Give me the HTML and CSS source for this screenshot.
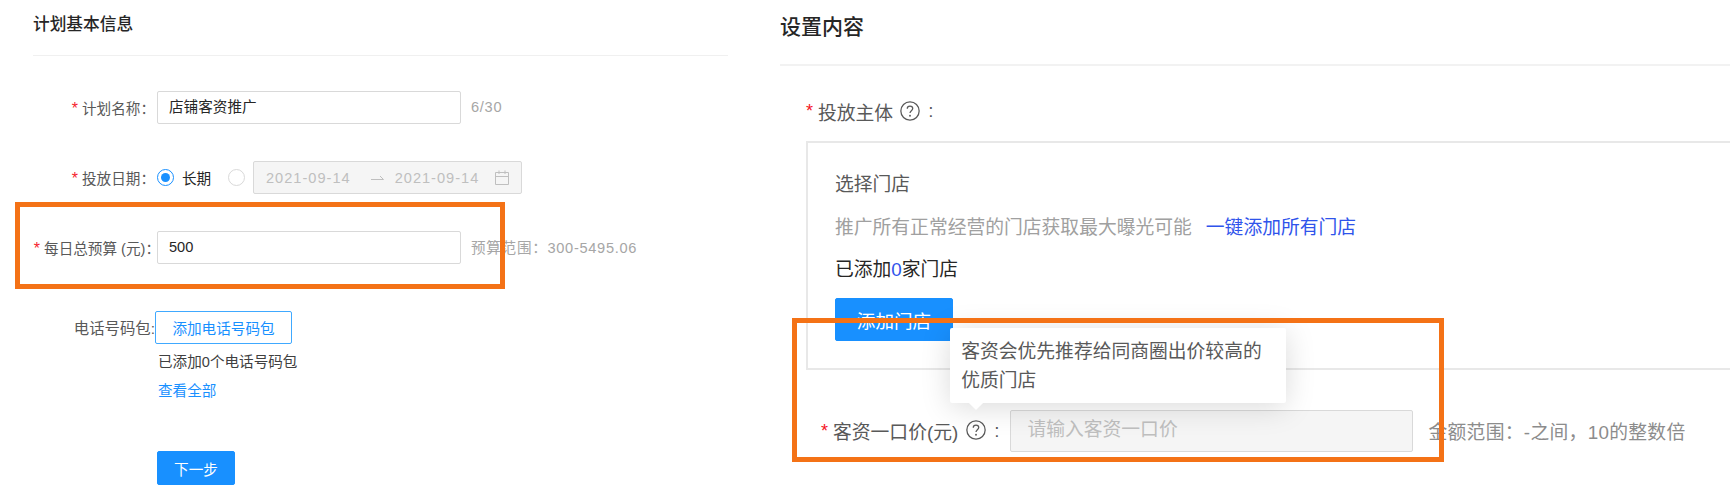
FILE: index.html
```html
<!DOCTYPE html>
<html lang="zh-CN">
<head>
    <meta charset="UTF-8">
    <title>计划设置</title>
    <link rel="stylesheet" href="styles.css">
</head>
<body>
    <section class="plan-panel">
        <h2 class="plan-title">计划基本信息</h2>

        <div class="plan-row plan-row-first">
            <label class="plan-label"><span class="star">*</span>计划名称：</label>
            <div class="text-input">店铺客资推广</div>
            <span class="hint">6/30</span>
        </div>

        <div class="plan-row">
            <label class="plan-label"><span class="star">*</span>投放日期：</label>
            <span class="radio radio-on"></span>
            <span class="radio-text">长期</span>
            <span class="radio"></span>
            <div class="date-range">
                <span class="date-value">2021-09-14</span>
                <svg class="date-arrow" width="13" height="8" viewBox="0 0 13 8"><path d="M0 5.5h12.5L9 2" fill="none" stroke="#bfbfbf" stroke-width="1"/></svg>
                <span class="date-value">2021-09-14</span>
                <svg class="date-icon" width="14" height="15" viewBox="0 0 14 15"><path d="M.5 2.5h13v12H.5zM.5 6.5h13M4 .5v3.500M10 .5v3.500" fill="none" stroke="#bfbfbf" stroke-width="1"/></svg>
            </div>
        </div>

        <div class="plan-row">
            <label class="plan-label plan-label-wide"><span class="star">*</span>每日总预算 (元)：</label>
            <div class="text-input">500</div>
            <span class="hint">预算范围：300-5495.06</span>
        </div>

        <div class="plan-row plan-row-phone">
            <label class="plan-label plan-label-phone">电话号码包:</label>
            <button class="btn-outline">添加电话号码包</button>
        </div>
        <div class="plan-note">已添加0个电话号码包</div>
        <a class="plan-link">查看全部</a>
        <button class="btn-primary btn-next">下一步</button>
    </section>

    <section class="content-panel">
        <h2 class="content-title">设置内容</h2>

        <div class="subject-label">
            <span class="star-big">*</span>投放主体
            <svg class="help-icon" width="20" height="20" viewBox="0 0 19 19"><circle cx="9.500" cy="9.500" r="8.700" fill="none" stroke="#595959" stroke-width="1.200"/><path d="M6.900 7.400c0-1.500 1.100-2.500 2.600-2.500s2.600 1 2.600 2.300c0 2-2.600 2.200-2.600 4.300" fill="none" stroke="#595959" stroke-width="1.200"/><circle cx="9.500" cy="14" r=".9" fill="#595959"/></svg>
            <span class="colon">:</span>
        </div>

        <div class="store-box">
            <div class="store-head">选择门店</div>
            <div class="store-desc">推广所有正常经营的门店获取最大曝光可能<a class="store-link">一键添加所有门店</a></div>
            <div class="store-count">已添加<em>0</em>家门店</div>
            <button class="btn-primary btn-store">添加门店</button>
        </div>

        <div class="price-row">
            <span class="star-big">*</span><span class="price-label">客资一口价(元)</span>
            <span class="tip-anchor">
                <svg class="help-icon" width="20" height="20" viewBox="0 0 19 19"><circle cx="9.500" cy="9.500" r="8.700" fill="none" stroke="#595959" stroke-width="1.200"/><path d="M6.900 7.400c0-1.500 1.100-2.500 2.600-2.500s2.600 1 2.600 2.300c0 2-2.600 2.200-2.600 4.300" fill="none" stroke="#595959" stroke-width="1.200"/><circle cx="9.500" cy="14" r=".9" fill="#595959"/></svg>
                <div class="tooltip">客资会优先推荐给同商圈出价较高的<br>优质门店</div>
            </span>
            <span class="colon">:</span>
            <div class="price-input">请输入客资一口价</div>
            <span class="price-hint">金额范围：-之间，10的整数倍</span>
        </div>
    </section>

    <div class="highlight highlight-budget"></div>
    <div class="highlight highlight-price"></div>
</body>
</html>
```

FILE: styles.css
```css
* {
    margin: 0;
    padding: 0;
    box-sizing: border-box;
}

html, body {
    height: 100%;
    overflow: hidden;
}

body {
    font-family: "Liberation Sans", "Noto Sans CJK SC", sans-serif;
    background: #fff;
    color: #595959;
    position: relative;
    display: flex;
}

button {
    font-family: inherit;
    cursor: pointer;
}

/* Left panel */
.plan-panel {
    width: 780px;
    flex-shrink: 0;
    padding: 0 52px 0 33px;
    font-size: 14.6px;
}

.plan-title {
    height: 56px;
    padding-top: 14px;
    font-size: 16.7px;
    line-height: 22px;
    font-weight: 500;
    color: #262626;
    border-bottom: 1px solid #f0f0f0;
}

.plan-row {
    display: flex;
    align-items: center;
    height: 33px;
    margin-top: 37px;
}

.plan-row-first {
    margin-top: 35px;
}

.plan-row-phone {
    margin-top: 47px;
}

.plan-label {
    width: 124px;
    padding-right: 2px;
    margin-top: -1px;
    text-align: right;
    white-space: nowrap;
    flex-shrink: 0;
}

.plan-label-wide {
    width: 127px;
    padding-right: 0;
    margin-right: -3px;
}

.plan-label-phone {
    padding-right: 2px;
    margin-right: -2px;
    font-size: 15.4px;
}

.star {
    color: #f5222d;
    margin-right: 4px;
    font-size: 16px;
}

.text-input {
    width: 304px;
    height: 33px;
    line-height: 30px;
    padding-left: 11px;
    border: 1px solid #d9d9d9;
    border-radius: 2px;
    color: #262626;
    background: #fff;
}

.hint {
    margin-left: 10px;
    margin-top: -2px;
    color: #a6a6a6;
    letter-spacing: .7px;
    white-space: nowrap;
}

.radio {
    width: 17px;
    height: 17px;
    border: 1px solid #d9d9d9;
    border-radius: 50%;
    flex-shrink: 0;
    margin-right: 8px;
    position: relative;
}

.radio-on {
    border-color: #1890ff;
}

.radio-on::after {
    content: '';
    position: absolute;
    top: 3px;
    left: 3px;
    width: 9px;
    height: 9px;
    border-radius: 50%;
    background: #1890ff;
}

.radio-text {
    width: 46px;
    color: #262626;
}

.date-range {
    display: flex;
    align-items: center;
    width: 269px;
    height: 33px;
    padding-left: 12px;
    border: 1px solid #d9d9d9;
    border-radius: 2px;
    background: #f5f5f5;
    color: #bfbfbf;
}

.date-value {
    letter-spacing: 1px;
    white-space: nowrap;
}

.date-arrow {
    margin: 0 11px 0 20px;
}

.date-icon {
    margin-left: 16px;
}

.plan-note {
    margin: 8px 0 0 125px;
    line-height: 20px;
    color: #404040;
}

.plan-link {
    display: block;
    margin: 9px 0 0 125px;
    line-height: 20px;
    color: #1890ff;
}

.btn-outline {
    width: 137px;
    height: 33px;
    font-size: 14.6px;
    color: #1890ff;
    background: #fff;
    border: 1px solid #40a9ff;
    border-radius: 2px;
}

.btn-primary {
    display: block;
    color: #fff;
    background: #1890ff;
    border: 1px solid #1890ff;
    border-radius: 2px;
}

.btn-next {
    width: 78px;
    height: 34px;
    margin: 50px 0 0 124px;
    font-size: 14.6px;
}

/* Right panel */
.content-panel {
    flex: 1;
    min-width: 0;
    font-size: 18.8px;
}

.content-title {
    height: 66px;
    padding-top: 13px;
    font-size: 21px;
    line-height: 28px;
    font-weight: 500;
    color: #262626;
    border-bottom: 2px solid #f2f2f2;
}

.subject-label {
    display: flex;
    align-items: center;
    height: 28px;
    margin: 31px 0 0 26px;
}

.star-big {
    color: #f5121d;
    margin-right: 5px;
    font-size: 18px;
}

.help-icon {
    display: block;
    flex-shrink: 0;
}

.subject-label .help-icon {
    margin-left: 7px;
}

.colon {
    margin-left: 8px;
}

.store-box {
    height: 229px;
    margin: 16px 0 0 26px;
    padding: 28px 0 0 27px;
    border: 2px solid #e8e8e8;
    border-right: 0;
}

.store-head {
    line-height: 28px;
}

.store-desc {
    margin-top: 15px;
    line-height: 28px;
    color: #a0a0a0;
}

.store-link {
    margin-left: 14px;
    color: #2f54eb;
}

.store-count {
    margin-top: 14px;
    line-height: 28px;
    color: #262626;
}

.store-count em {
    font-style: normal;
    color: #2f54eb;
}

.btn-store {
    width: 118px;
    height: 43px;
    margin-top: 14px;
    font-size: 18.6px;
}

.price-row {
    display: flex;
    align-items: center;
    height: 42px;
    margin: 40px 0 0 41px;
}

.price-label {
    margin-top: -2px;
    white-space: nowrap;
}

.tip-anchor {
    position: relative;
    margin-left: 8px;
    margin-top: -3px;
}

.tooltip {
    position: absolute;
    left: -16px;
    bottom: 37px;
    width: 336px;
    height: 75px;
    padding: 9px 11px;
    font-size: 18.8px;
    line-height: 29.500px;
    color: #595959;
    white-space: nowrap;
    background: #fff;
    border-radius: 2px;
    box-shadow: 0 4px 30px rgba(0, 0, 0, .15);
    z-index: 2;
}

.tooltip::after {
    content: '';
    position: absolute;
    left: 21px;
    bottom: -5px;
    width: 10px;
    height: 10px;
    background: #fff;
    transform: rotate(45deg);
}

.price-input {
    width: 403px;
    height: 42px;
    line-height: 38px;
    margin-left: 11px;
    padding-left: 16px;
    border: 1px solid #d9d9d9;
    border-radius: 2px;
    background: #f5f5f5;
    color: #bfbfbf;
    flex-shrink: 0;
}

.price-hint {
    margin-left: 15px;
    margin-top: -2px;
    color: #8c8c8c;
    letter-spacing: .3px;
    white-space: nowrap;
}

/* Orange review marks drawn over the shot */
.highlight {
    position: absolute;
    border: 5px solid #f47216;
    pointer-events: none;
    z-index: 5;
}

.highlight-budget {
    left: 15px;
    top: 202px;
    width: 490px;
    height: 87px;
}

.highlight-price {
    left: 792px;
    top: 318px;
    width: 652px;
    height: 144px;
}
```
